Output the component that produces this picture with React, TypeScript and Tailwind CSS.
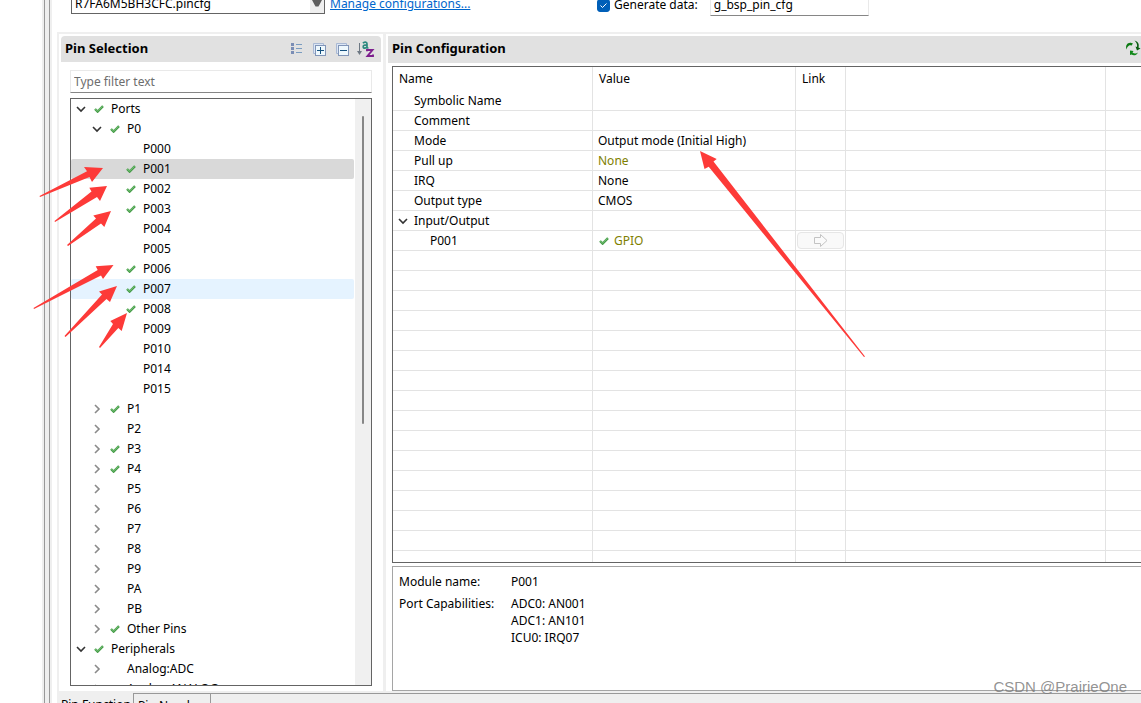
import { useState } from "react";

interface TreeNode {
  label: string;
  level: number;
  open?: boolean;
  leaf?: boolean;
  checked?: boolean;
}

interface ConfigRow {
  name: string;
  value?: string;
  muted?: boolean;
  group?: boolean;
  child?: boolean;
}

const nodes: TreeNode[] = [
  { label: "Ports", level: 0, open: true, checked: true },
  { label: "P0", level: 1, open: true, checked: true },
  { label: "P000", level: 2, leaf: true },
  { label: "P001", level: 2, leaf: true, checked: true },
  { label: "P002", level: 2, leaf: true, checked: true },
  { label: "P003", level: 2, leaf: true, checked: true },
  { label: "P004", level: 2, leaf: true },
  { label: "P005", level: 2, leaf: true },
  { label: "P006", level: 2, leaf: true, checked: true },
  { label: "P007", level: 2, leaf: true, checked: true },
  { label: "P008", level: 2, leaf: true, checked: true },
  { label: "P009", level: 2, leaf: true },
  { label: "P010", level: 2, leaf: true },
  { label: "P014", level: 2, leaf: true },
  { label: "P015", level: 2, leaf: true },
  { label: "P1", level: 1, checked: true },
  { label: "P2", level: 1 },
  { label: "P3", level: 1, checked: true },
  { label: "P4", level: 1, checked: true },
  { label: "P5", level: 1 },
  { label: "P6", level: 1 },
  { label: "P7", level: 1 },
  { label: "P8", level: 1 },
  { label: "P9", level: 1 },
  { label: "PA", level: 1 },
  { label: "PB", level: 1 },
  { label: "Other Pins", level: 1, checked: true },
  { label: "Peripherals", level: 0, open: true, checked: true },
  { label: "Analog:ADC", level: 1 },
  { label: "Analog:ANALOG", level: 1, checked: true },
];

const configRows: ConfigRow[] = [
  { name: "Symbolic Name" },
  { name: "Comment" },
  { name: "Mode", value: "Output mode (Initial High)" },
  { name: "Pull up", value: "None", muted: true },
  { name: "IRQ", value: "None" },
  { name: "Output type", value: "CMOS" },
  { name: "Input/Output", group: true },
  { name: "P001", value: "GPIO", muted: true, child: true },
];

const emptyRows = Array.from({ length: 40 }, (_, i) => i);

const indents = ["pl-[3px]", "pl-[19px]", "pl-[35px]"];

function CheckMark() {
  return (
    <svg width="10" height="8" viewBox="0 0 10 8" className="shrink-0">
      <path d="M1 4l2.600 2.600L9 1.200" fill="none" stroke="#459c48" strokeWidth="2.400" />
      <path d="M1.200 4l2.400 2L8.600 1.200" fill="none" stroke="#86cb84" strokeWidth="0.900" />
    </svg>
  );
}

function Chevron({ open }: { open?: boolean }) {
  return (
    <svg width="10" height="10" viewBox="0 0 10 10" fill="none" className="shrink-0">
      {open ? (
        <path d="M1 3l4 4 4-4" stroke="#333" strokeWidth="1.600" />
      ) : (
        <path d="M3 1l4 4-4 4" stroke="#8a8a8a" strokeWidth="1.600" />
      )}
    </svg>
  );
}

function ListIcon() {
  return (
    <svg width="12" height="12" viewBox="0 0 12 12">
      <g fill="#7a8db5">
        <rect x="0" y="0" width="3" height="3" />
        <rect x="0" y="4" width="3" height="3" />
        <rect x="0" y="8" width="3" height="3" />
      </g>
      <path d="M5 1.500h6M5 5.500h6M5 9.500h6" stroke="#7a9cc0" />
    </svg>
  );
}

function BoxIcon({ plus }: { plus?: boolean }) {
  return (
    <svg width="13" height="13" viewBox="0 0 13 13" fill="none">
      <path d="M2.500 10.500h-2v-10h10v2" fill="#dce6f4" stroke="#a9b9d4" />
      <rect x="2.500" y="2.500" width="10" height="10" fill="#eef8fd" stroke="#8195b8" />
      <path d={plus ? "M4 7.500h7M7.500 4v7" : "M4 7.500h7"} stroke="#15517f" />
    </svg>
  );
}

function SortIcon() {
  return (
    <svg width="17" height="17" viewBox="0 0 17 17" className="overflow-visible">
      <path d="M2.500 2v10" stroke="#6d7883" />
      <path d="M0 10h5l-2.500 4z" fill="#6d7883" />
      <g fill="none" strokeWidth="2">
        <path d="M6 2.200C7 .6 10 .6 10 2.800V7.500M10 4C7.500 3.800 6 4.500 6.200 6 6.500 7.800 9.500 7.300 10 5.500M9.500 7h2" stroke="#2c8a80" strokeWidth="1.700" />
        <path d="M10 10.200V9h5.500L10.500 15h5.500v-1.500" stroke="#7d1f8d" strokeWidth="1.900" />
      </g>
    </svg>
  );
}

function RecycleIcon() {
  return (
    <svg width="16" height="16" viewBox="0 0 16 16">
      <path d="M1.500 9.500C0 5 3 2 6.500 3L8 3.500 6 6 5.500 5C3.500 5.500 2 7 1.500 9.500z" fill="#0b7a12" />
      <path d="M9.500 0.500C13 1.500 14.500 4 13.500 7.500L15.500 8.500 12 10.500 10.500 6.500 12 7C12.500 4.500 11.500 2.500 9.500 .5z" fill="#0a5c10" />
      <path d="M5 10.500L8.500 11 7.500 12.500C9.500 14 11.500 13.500 13 12.500 11.500 15.500 8.500 16 6.500 14.500L5 15z" fill="#12891a" />
    </svg>
  );
}

function PinTree() {
  const [selected, setSelected] = useState("P001");

  return (
    <div className="flex flex-1 min-h-0 overflow-hidden border border-[#646464] bg-white">
      <ul className="flex-1 overflow-hidden">
        {nodes.map((node) => (
          <li
            key={node.label}
            onClick={() => setSelected(node.label)}
            className={`flex h-5 items-center rounded-xs mr-px ${indents[node.level]} ${
              node.label === selected ? "bg-[#d9d9d9]" : node.label === "P007" ? "bg-[#e5f3ff]" : ""
            }`}
          >
            <span className="flex w-5 shrink-0 justify-start pl-0.5">
              {!node.leaf && <Chevron open={node.open} />}
            </span>
            <span className="flex w-[17px] shrink-0">{node.checked && <CheckMark />}</span>
            <span className="whitespace-nowrap">{node.label}</span>
          </li>
        ))}
      </ul>
      <div className="flex w-4 justify-center bg-[#f0f0f0] pt-[17px]">
        <div className="h-[308px] w-0.5 rounded bg-[#868686]" />
      </div>
    </div>
  );
}

function PinSelection() {
  const [filter, setFilter] = useState("");

  return (
    <section className="flex w-[324px] shrink-0 flex-col pt-0.5">
      <header className="mx-0.5 flex h-[26px] shrink-0 items-center justify-between rounded-t-sm bg-[#e1e1e1] pl-1 pr-[7px]">
        <h2 className="pb-[3px] text-[13px] font-bold">Pin Selection</h2>
        <div className="flex items-center gap-2.5">
          <button aria-label="List view"><ListIcon /></button>
          <button aria-label="Expand all"><BoxIcon plus /></button>
          <button aria-label="Collapse all"><BoxIcon /></button>
          <button aria-label="Sort" className="-ml-0.5"><SortIcon /></button>
        </div>
      </header>
      <div className="flex min-h-0 flex-1 flex-col gap-[5px] pb-[5px] pl-[11px] pr-[11px] pt-2">
        <input
          aria-label="Filter pins"
          placeholder="Type filter text"
          value={filter}
          onChange={(e) => setFilter(e.target.value)}
          className="h-[23px] w-full border border-[#e9e9e9] border-b-[#868686] bg-white px-[3px] outline-none placeholder:text-[#6d6d6d]"
        />
        <PinTree />
      </div>
    </section>
  );
}

function ConfigTable() {
  const cell = "h-5 border-b border-r border-[#e3e3e3] p-0 whitespace-nowrap";
  const lastCell = "h-5 border-b border-[#e3e3e3] p-0";

  return (
    <div className="flex-1 min-h-0 overflow-hidden border border-r-0 border-[#646464] bg-white">
      <table className="w-full table-fixed border-separate border-spacing-0 text-left">
        <colgroup>
          <col className="w-[200px]" />
          <col className="w-[203px]" />
          <col className="w-[50px]" />
          <col className="w-[260px]" />
          <col />
        </colgroup>
        <thead>
          <tr className="h-6">
            {["Name", "Value", "Link", "", ""].map((title, i) => (
              <th key={i} className="border-r border-[#e3e3e3] px-1.5 py-0 font-normal last:border-r-0">
                {title}
              </th>
            ))}
          </tr>
        </thead>
        <tbody>
          {configRows.map((row) => (
            <tr key={row.name}>
              <td className={cell}>
                <div className={`flex items-center ${row.child ? "pl-[37px]" : "pl-[5px]"}`}>
                  {!row.child && <span className="flex w-4">{row.group && <Chevron open />}</span>}
                  {row.name}
                </div>
              </td>
              <td className={cell}>
                <div className={`flex items-center gap-[5px] ${row.child ? "pl-1.5" : "pl-[5px]"} ${row.muted ? "text-[#808000]" : ""}`}>
                  {row.child && <CheckMark />}
                  {row.value}
                </div>
              </td>
              <td className={cell}>
                {row.child && (
                  <button
                    disabled
                    aria-label="Go to peripheral"
                    className="mx-px flex h-[17px] w-[47px] items-center justify-center rounded-sm border border-[#e6e6e6] bg-[#f9f9f9]"
                  >
                    <svg width="15" height="13" viewBox="0 0 15 13">
                      <path d="M1.500 3.500h6v-3l6.500 6-6.500 6v-3h-6z" fill="#fafafa" stroke="#c3c3c3" />
                    </svg>
                  </button>
                )}
              </td>
              <td className={cell} />
              <td className={lastCell} />
            </tr>
          ))}
          {emptyRows.map((i) => (
            <tr key={i}>
              <td className={cell} />
              <td className={cell} />
              <td className={cell} />
              <td className={cell} />
              <td className={lastCell} />
            </tr>
          ))}
        </tbody>
      </table>
    </div>
  );
}

function PinConfiguration() {
  return (
    <section className="flex min-w-0 flex-1 flex-col pl-0.5 pt-0.5">
      <header className="flex h-[27px] shrink-0 items-center justify-between bg-[#e1e1e1] pl-1">
        <h2 className="pb-[3px] text-[13px] font-bold">Pin Configuration</h2>
        <button aria-label="Refresh" className="pb-[3px]"><RecycleIcon /></button>
      </header>
      <div className="flex min-h-0 flex-1 flex-col gap-[3px] pl-1 pt-[3px]">
        <ConfigTable />
        <dl className="grid h-[125px] shrink-0 grid-cols-[112px_1fr] content-start gap-y-[5px] border border-r-0 border-[#a5a5a5] pl-1.5 pt-1.5 leading-[17px]">
          <dt>Module name:</dt>
          <dd>P001</dd>
          <dt>Port Capabilities:</dt>
          <dd>
            ADC0: AN001
            <br />
            ADC1: AN101
            <br />
            ICU0: IRQ07
          </dd>
        </dl>
      </div>
    </section>
  );
}

function Arrows() {
  return (
    <svg width="1141" height="703" viewBox="0 0 1141 703" className="pointer-events-none absolute left-0 top-0" fill="#fd3a38">
      <path d="M39.500 196L87 171.300 84 167 103 168 92 182 89.500 177 40 197z" />
      <path d="M54.500 221L91.500 191.500 89.300 187.700 107 186 100 201 97 197 55 222z" />
      <path d="M67 245L96 218.500 93.300 215.500 111 211 104.300 227 101 223.500 68 246z" />
      <path d="M33.500 308L97.700 270 95.700 266.300 113.500 265 103 279 101 275.500 34 309z" />
      <path d="M64.500 336L102 294.500 99 291.500 117 286 110 302 106.500 299 65.500 337z" />
      <path d="M99 347L113 324 110.300 321 127 313 121.700 331 118.300 328 100 348z" />
      <path d="M700 151L716.700 159 713.500 161.500 865 356.500 864 357 708.700 166.700 704.500 169z" />
    </svg>
  );
}

export default function App() {
  const [generate, setGenerate] = useState(true);
  const [dataName, setDataName] = useState("g_bsp_pin_cfg");

  return (
    <div className="relative flex h-screen overflow-hidden bg-white pl-[42px] font-['Noto_Sans',sans-serif] text-[12px] leading-4 text-black">
      <div className="flex w-2.5 shrink-0 bg-[#efefef] px-0.5">
        <div className="flex-1 border-x border-[#999]" />
      </div>
      <div className="flex min-w-0 flex-1 flex-col">
        <div className="h-8 shrink-0 overflow-hidden">
          <div className="-mt-2 flex items-start pl-[19px]">
            <div className="relative">
              <select
                aria-label="Pin configuration file"
                className="block h-[22px] w-[254px] appearance-none border border-[#646464] bg-white pl-[3px] pt-px outline-none"
              >
                <option>R7FA6M5BH3CFC.pincfg</option>
              </select>
              <span className="pointer-events-none absolute bottom-px right-px top-px flex w-3.5 items-center justify-center bg-[#efefef]">
                <svg width="10" height="8" viewBox="0 0 10 8">
                  <path d="M0 1h10L6.500 7.500h-3z" fill="#5f5f5f" />
                </svg>
              </span>
            </div>
            <a href="#" className="ml-[5px] w-[145px] pt-1 text-[#0066cc] underline">
              Manage configurations...
            </a>
            <label className="ml-[122px] flex items-center gap-1 pt-[5px]">
              <span className="relative flex">
                <input
                  type="checkbox"
                  checked={generate}
                  onChange={(e) => setGenerate(e.target.checked)}
                  className="h-[13px] w-[13px] appearance-none rounded-[3px] border border-[#005fb8] checked:bg-[#005fb8]"
                />
                {generate && (
                  <svg width="13" height="13" viewBox="0 0 13 13" className="pointer-events-none absolute left-0 top-0">
                    <path d="M3.500 6.500l2 2 4-4" fill="none" stroke="#fff" />
                  </svg>
                )}
              </span>
              Generate data:
            </label>
            <input
              aria-label="Generated data name"
              value={dataName}
              onChange={(e) => setDataName(e.target.value)}
              className="ml-3 h-6 w-[159px] border border-[#e9e9e9] border-b-[#868686] px-[3px] pt-px outline-none"
            />
          </div>
        </div>
        <div className="ml-[5px] flex min-h-0 flex-1 border-l-2 border-t-2 border-[#efefef]">
          <PinSelection />
          <div className="w-[3px] shrink-0 bg-[#efefef]" />
          <PinConfiguration />
        </div>
        <nav className="ml-[5px] flex h-3 shrink-0 items-start overflow-hidden bg-[#efefef]">
          <button className="h-6 w-[76px] shrink-0 whitespace-nowrap pl-1 pt-1 text-left">Pin Function</button>
          <button className="mt-0.5 h-6 w-[78px] shrink-0 whitespace-nowrap border-x border-t border-[#999] pl-1 pt-px text-left">
            Pin Number
          </button>
          <div className="mt-0.5 flex-1 border-t border-[#999]" />
        </nav>
      </div>
      <Arrows />
      <div className="pointer-events-none absolute bottom-1.5 right-3.5 font-['Liberation_Sans'] text-[15px] leading-5 text-[#777]/80">
        CSDN @PrairieOne
      </div>
    </div>
  );
}
